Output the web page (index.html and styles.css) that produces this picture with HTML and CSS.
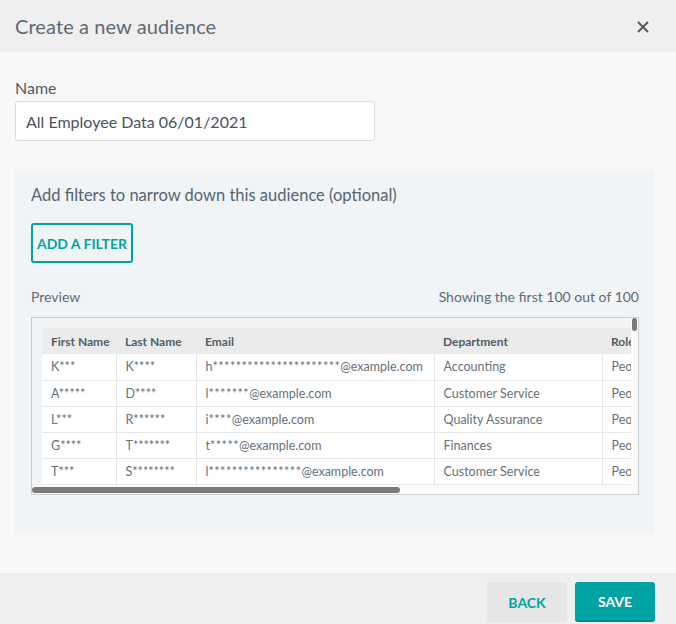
FILE: index.html
```html
<!DOCTYPE html>
<html lang="en">
<head>
<meta charset="utf-8">
<title>Create a new audience</title>
<link rel="stylesheet" href="styles.css">
</head>
<body>
<div class="modal">
  <header class="header">
    <h1 class="title">Create a new audience</h1>
    <button class="close" aria-label="Close">
      <svg width="12" height="12" viewBox="0 0 12 12"><path d="M1 1 L11 11 M11 1 L1 11" stroke="#555b60" stroke-width="2" fill="none"/></svg>
    </button>
  </header>
  <main class="content">
    <label class="label" for="name">Name</label>
    <input id="name" class="input" type="text" value="All Employee Data 06/01/2021">
    <section class="panel">
      <p class="panel-text">Add filters to narrow down this audience (optional)</p>
      <button class="btn-outline">ADD A FILTER</button>
      <div class="preview-row">
        <span>Preview</span>
        <span>Showing the first 100 out of 100</span>
      </div>
      <div class="tablebox">
        <div class="viewport">
          <table class="grid">
            <colgroup>
              <col class="c1"><col class="c2"><col class="c3"><col class="c4"><col class="c5">
            </colgroup>
            <thead>
              <tr><th>First Name</th><th>Last Name</th><th>Email</th><th>Department</th><th>Role</th></tr>
            </thead>
            <tbody>
              <tr><td>K***</td><td>K****</td><td>h<span class="mask">**********************</span>@example.com</td><td>Accounting</td><td>People Manager</td></tr>
              <tr><td>A*****</td><td>D****</td><td>l<span class="mask">*******</span>@example.com</td><td>Customer Service</td><td>People Manager</td></tr>
              <tr><td>L***</td><td>R******</td><td>i<span class="mask">****</span>@example.com</td><td>Quality Assurance</td><td>People Manager</td></tr>
              <tr><td>G****</td><td>T*******</td><td>t<span class="mask">*****</span>@example.com</td><td>Finances</td><td>People Manager</td></tr>
              <tr><td>T***</td><td>S********</td><td>l<span class="mask">****************</span>@example.com</td><td>Customer Service</td><td>People Manager</td></tr>
              <tr><td>M****</td><td>B*****</td><td>m<span class="mask">*****</span>@example.com</td><td>Accounting</td><td>People Manager</td></tr>
            </tbody>
          </table>
        </div>
        <div class="vtrack"><div class="vthumb"></div></div>
        <div class="htrack"><div class="hthumb"></div></div>
      </div>
    </section>
  </main>
  <footer class="footer">
    <button class="btn-back">BACK</button>
    <button class="btn-save">SAVE</button>
  </footer>
</div>
</body>
</html>
```

FILE: styles.css
```css
* { box-sizing: border-box; }
html, body { margin: 0; padding: 0; }
body {
  width: 676px;
  height: 624px;
  font-family: Lato, "Noto Sans", sans-serif;
  background: #f8f8f8;
  overflow: hidden;
}
.modal {
  display: flex;
  flex-direction: column;
  height: 624px;
}
.header {
  height: 52px;
  flex: none;
  background: #efefef;
  display: flex;
  align-items: center;
  justify-content: space-between;
  padding: 0 27px 0 15px;
}
.title {
  margin: 0;
  font-size: 20px;
  font-weight: 400;
  color: #5b6a75;
  letter-spacing: 0.1px;
}
.close {
  border: 0;
  background: none;
  padding: 0;
  display: flex;
  margin-top: 1px;
}
.content {
  flex: 1;
  padding: 26px 21px 0 15px;
  display: flex;
  flex-direction: column;
}
.label {
  font-size: 16px;
  line-height: 20px;
  color: #4f5d68;
  margin-bottom: 3px;
}
.input {
  width: 360px;
  height: 40px;
  border: 1px solid #dcdcdc;
  border-radius: 3px;
  background: #fff;
  padding: 0 10px;
  font-family: inherit;
  font-size: 16px;
  color: #46545f;
  outline: none;
}
.panel {
  margin-top: 28px;
  background: #f0f4f7;
  padding: 16px 16px 40px 16px;
  display: flex;
  flex-direction: column;
  align-items: flex-start;
}
.panel-text {
  margin: 0;
  font-size: 16.5px;
  line-height: 20px;
  color: #56646f;
}
.btn-outline {
  margin-top: 18px;
  height: 40px;
  width: 102px;
  border: 2px solid #00a3a3;
  border-radius: 3px;
  background: transparent;
  color: #00a3a3;
  font-family: inherit;
  font-weight: 700;
  font-size: 14px;
  padding: 0;
}
.preview-row {
  margin-top: 25px;
  width: 608px;
  display: flex;
  justify-content: space-between;
  font-size: 14px;
  line-height: 18px;
  color: #5f6b75;
}
.tablebox {
  margin-top: 11px;
  width: 608px;
  border: 1px solid #c9cdd0;
  display: grid;
  grid-template-columns: minmax(0, 1fr) 7px;
  grid-template-rows: 168px 8px;
}
.viewport {
  overflow: hidden;
  padding: 10px 0 0 10px;
  min-width: 0;
}
.grid {
  border-collapse: collapse;
  table-layout: fixed;
  width: 700px;
  font-size: 12.5px;
}
.c1 { width: 74px; }
.c2 { width: 80px; }
.c3 { width: 238px; }
.c4 { width: 168px; }
.c5 { width: 140px; }
.grid th {
  height: 26px;
  background: #ebebeb;
  text-align: left;
  font-size: 12px;
  font-weight: 700;
  color: #4f5d68;
  padding: 0 9px;
  white-space: nowrap;
}
.grid td {
  height: 26px;
  background: #fff;
  color: #65717b;
  padding: 0 9px;
  border-bottom: 1px solid #e7e7e7;
  border-right: 1px solid #e7e7e7;
  white-space: nowrap;
  overflow: hidden;
}
.mask {
  letter-spacing: 0.5px;
}
.vtrack {
  background: #fafafa;
  padding: 0 1px;
}
.vthumb {
  width: 5px;
  height: 13px;
  border-radius: 3px;
  background: #7a7a7a;
}
.htrack {
  grid-column: 1 / span 2;
  background: #fafafa;
  padding: 1px 0;
}
.hthumb {
  width: 368px;
  height: 6px;
  border-radius: 3px;
  background: #7a7a7a;
}
.footer {
  height: 51px;
  flex: none;
  background: #efefef;
  display: flex;
  justify-content: flex-end;
  align-items: flex-start;
  gap: 8px;
  padding: 9px 21px 0 0;
}
.btn-back, .btn-save {
  width: 80px;
  height: 40px;
  border: 0;
  border-radius: 3px;
  font-family: inherit;
  font-weight: 700;
  font-size: 14px;
  padding: 0;
}
.btn-back {
  background: #e6e6e6;
  color: #00a3a3;
}
.btn-save {
  background: #00a3a3;
  color: #fff;
  border-bottom: 2px solid #008b8b;
}
```
